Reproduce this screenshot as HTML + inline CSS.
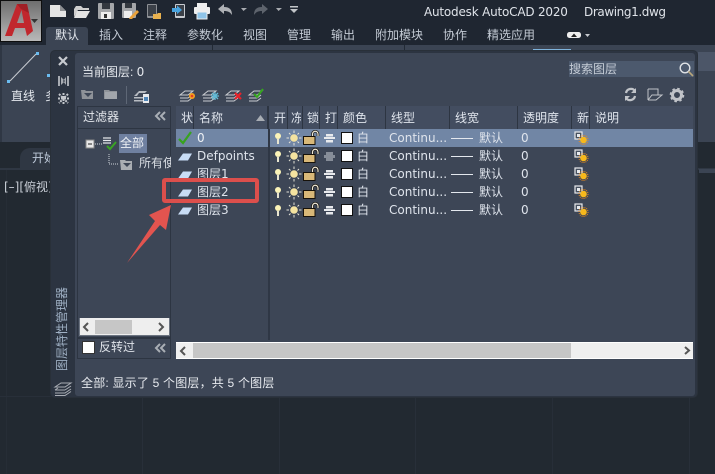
<!DOCTYPE html>
<html><head><meta charset="utf-8">
<style>
html,body{margin:0;padding:0;background:#222931}
body{width:715px;height:474px;position:relative;overflow:hidden;font:12px "Liberation Sans","Noto Sans CJK SC",sans-serif;color:#dfe4ec}
.a{position:absolute}
.t{position:absolute;white-space:nowrap;line-height:16px;font-size:12px}
.l{font-family:"DejaVu Sans","Noto Sans CJK SC",sans-serif}
.m{color:#c3cad4}
svg{position:absolute;overflow:visible}
</style></head><body>
<!-- background -->
<div class="a" style="left:0;top:0;width:715px;height:45px;background:#1f2631"></div>
<div class="a" style="left:0;top:45px;width:715px;height:97px;background:#3b4453"></div>
<div class="a" style="left:0;top:45px;width:2px;height:97px;background:#2f3744"></div>
<div class="a" style="left:0;top:142px;width:715px;height:27px;background:#222931"></div>
<div class="a" style="left:0;top:168px;width:715px;height:2px;background:#2f3743"></div>
<div class="a" style="left:20px;top:148px;width:40px;height:21px;background:#2f3743;border-radius:10px 0 0 0"></div>
<div class="a" style="left:698px;top:52px;width:17px;height:19px;background:#4c5668"></div>
<div class="a" style="left:699px;top:169px;width:16px;height:4px;background:#3b4453"></div>
<div class="a" style="left:142px;top:397px;width:1px;height:77px;background:#282f39"></div>
<div class="a" style="left:279px;top:397px;width:1px;height:77px;background:#282f39"></div>
<div class="a" style="left:415px;top:397px;width:1px;height:77px;background:#282f39"></div>
<div class="a" style="left:552px;top:397px;width:1px;height:77px;background:#272e38"></div>
<div class="a" style="left:689px;top:397px;width:1px;height:77px;background:#282f39"></div>
<div class="a" style="left:6px;top:170px;width:1px;height:304px;background:#262d36"></div>
<div class="a" style="left:0;top:396px;width:51px;height:1px;background:#282f39"></div>
<div class="a" style="left:212px;top:45px;width:1px;height:5px;background:#222a35"></div>
<div class="a" style="left:404px;top:45px;width:1px;height:5px;background:#222a35"></div>
<div class="a" style="left:533px;top:49px;width:38px;height:1px;background:#7fb3dc"></div>

<!-- logo -->
<div class="a" style="left:0;top:0;width:40px;height:40px;background:linear-gradient(#6e6e6e,#b9b9b9);border:1px solid #0e0e0e;box-sizing:content-box"></div>
<svg style="left:0;top:0" width="42" height="42">
<path d="M5 36 L17 4 H27 L33 31 L27 36 L25 28 H15 L12 36Z M17 23 H24 L21.500 10Z" fill="#c1272d" fill-rule="evenodd"/>
<path d="M17 4 H27 L29 13 L21 9Z" fill="#9f1f25"/>
<path d="M31 19 H38 L34.500 23Z" fill="#333"/>
</svg>

<!-- quick access icons -->
<svg style="left:0;top:0" width="320" height="27">
<path d="M50 5 H60 L66 11 V17 H50Z" fill="#e4e4e4"/><path d="M60 5 L66 11 H60Z" fill="#8d8f92"/>
<path d="M74 9 L76 6 H81 L83 8 H89 V10 H78 L74 17Z" fill="#cfcfcf"/><path d="M77 11 H90 L86 18 H74Z" fill="#e4e4e4"/>
<rect x="98" y="3" width="16" height="16" rx="1" fill="#a4a6a9"/><rect x="102" y="3" width="8" height="6" fill="#33383f"/><rect x="101" y="12" width="10" height="7" fill="#eee"/><rect x="104" y="14" width="3" height="4" fill="#333"/>
<rect x="122" y="3" width="14" height="15" rx="1" fill="#a4a6a9"/><rect x="125" y="3" width="7" height="5" fill="#33383f"/><rect x="124" y="11" width="8" height="7" fill="#eee"/><path d="M130 17 L137 10 L139 12 L132 19 L129 19Z" fill="#e9a23b"/>
<rect x="147" y="4" width="10" height="14" rx="1" fill="#8d9095"/><rect x="148" y="5" width="8" height="11" fill="#3b4048"/><path d="M153 14 H157 L158 13 H161 V19 H153Z" fill="#e8b14f"/>
<rect x="175" y="4" width="10" height="14" rx="1" fill="#c8cbd0"/><rect x="176" y="5" width="8" height="11" fill="#3b4048"/><path d="M172 8 H177 V5.500 L182 10 L177 14 V12 H172Z" fill="#49a4e0"/>
<rect x="197" y="3" width="10" height="4" fill="#eee"/><rect x="194" y="7" width="16" height="7" rx="1" fill="#eee"/><rect x="197" y="12" width="10" height="7" fill="#8fc4e8" stroke="#eee"/>
<path d="M218 9 L224 4 V7 C230 7 232 10 232 15 C230 12 228 11 224 11 V14Z" fill="#aeb1b5"/>
<path d="M241 8 H247 L243.500 11Z M276 8 H282 L278.500 11Z" fill="#a8abb0"/>
<path d="M268 9 L262 4 V7 C256 7 254 10 254 15 C256 12 258 11 262 11 V14Z" fill="#5d636c"/>
<rect x="290" y="6" width="8" height="1.500" fill="#c2c5c9"/><path d="M290 9 H298 L294 13Z" fill="#c2c5c9"/>
</svg>
<div class="t l" style="left:424px;top:4px;font-size:12px;letter-spacing:-.2px;color:#dfe3e9">Autodesk AutoCAD 2020</div>
<div class="t l" style="left:584px;top:4px;font-size:12px;letter-spacing:-.4px;color:#dfe3e9">Drawing1.dwg</div>

<!-- tabs -->
<div class="a" style="left:46px;top:27px;width:42px;height:18px;background:#3b4453;border-radius:3px 3px 0 0"></div>
<div class="t" style="left:55px;top:27px;color:#e4e8ee">默认</div>
<div class="t m" style="left:99px;top:27px">插入</div>
<div class="t m" style="left:143px;top:27px">注释</div>
<div class="t m" style="left:187px;top:27px">参数化</div>
<div class="t m" style="left:243px;top:27px">视图</div>
<div class="t m" style="left:287px;top:27px">管理</div>
<div class="t m" style="left:331px;top:27px">输出</div>
<div class="t m" style="left:375px;top:27px">附加模块</div>
<div class="t m" style="left:443px;top:27px">协作</div>
<div class="t m" style="left:487px;top:27px">精选应用</div>
<svg style="left:566px;top:31px" width="30" height="8"><rect x="1" y="1" width="14" height="6" rx="2.500" fill="#eee"/><path d="M5 6 L8 2.500 L11 6Z" fill="#222"/><path d="M19 3 H24 L21.500 6Z" fill="#c6c9ce"/></svg>

<!-- ribbon content -->
<svg style="left:0;top:45px" width="52" height="50"><path d="M10 36 L36 9" stroke="#c8ccd2" stroke-width="1"/><rect x="36" y="7" width="3" height="3" fill="#6bbcf0"/><rect x="7" y="35" width="3" height="3" fill="#6bbcf0"/><rect x="47" y="29" width="3" height="3" fill="#6bbcf0"/></svg>
<div class="t" style="left:11px;top:88px;color:#e4e8ee">直线</div>
<div class="t" style="left:45px;top:88px;color:#e4e8ee;width:5px;overflow:hidden">多</div>
<div class="t" style="left:32px;top:150px;color:#bcc8d8;width:19px;overflow:hidden">开始</div>
<div class="t l" style="left:4px;top:179px;color:#c9ced6;width:47px;overflow:hidden">[–][俯视]</div>

<!-- panel -->
<div class="a" style="left:51px;top:51px;width:646px;height:346px;background:#2c3441;border-radius:4px;box-shadow:0 0 0 1px #293039"></div>
<div class="a" style="left:75px;top:53px;width:620px;height:343px;background:#3d4656;border-radius:3px"></div>
<svg style="left:51px;top:51px" width="24" height="60">
<path d="M8 6 L16 14 M16 6 L8 14" stroke="#c8cbd0" stroke-width="2.200"/>
<path d="M8 25 V35 M17 25 V35" stroke="#a8acb2" stroke-width="2"/><path d="M10 26 L14 30 L10 34Z M15 26 L12 30 L15 34Z" fill="#a8acb2"/>
<path d="M8 43 L17 52 M17 43 L8 52 M12.500 42 V53 M7 47.500 H18" stroke="#c4c7cc" stroke-width="2" stroke-dasharray="2 1"/>
</svg>
<div class="a" style="left:20px;top:321px;width:84px;height:16px;line-height:16px;transform:rotate(-90deg);transform-origin:center;color:#9fb0c4;font-size:12px;white-space:nowrap;text-align:center">图层特性管理器</div>
<svg style="left:54px;top:381px" width="18" height="15" fill="none" stroke="#a9adb4" stroke-width="1"><path d="M1 6 L7 2 H17 L11 6Z M1 9 L4 7 M11 9 H1 M17 5 L11 9 M1 12 H11 L17 8 M1 14.500 H11 L17 10.500"/></svg>

<div class="t" style="left:82px;top:64px;color:#e6e9ee">当前图层: <span class="l">0</span></div>
<!-- search -->
<div class="a" style="left:569px;top:61px;width:125px;height:16px;background:#4c596d"></div>
<div class="t" style="left:569px;top:61px;color:#c5ccd6">搜索图层</div>
<svg style="left:678px;top:61px" width="16" height="16" fill="none"><circle cx="7" cy="7" r="4.800" stroke="#dfe2e6" stroke-width="1.400"/><path d="M10.500 10.500 L15 15" stroke="#b9a77c" stroke-width="1.600"/></svg>

<!-- toolbars -->
<svg style="left:0;top:84px" width="715" height="22">
<path d="M81 6 H85 L86 7 H93 V15 H82Z" fill="#8e9298"/><path d="M84 9 H92 L88 13Z" fill="#3d4656"/>
<path d="M104 6 H109 L110 7 H117 V15 H104Z" fill="#8e9298"/><rect x="105" y="8" width="12" height="7" fill="#a1a5ab"/>
<rect x="126" y="2" width="1" height="18" fill="#5e6776"/>
<path d="M134 12 L139 7 H147 L145 9 H139 L137 12Z" fill="#b8bcc2"/><rect x="134" y="13" width="9" height="1.500" fill="#b8bcc2"/><rect x="134" y="16" width="9" height="1.500" fill="#b8bcc2"/><rect x="143" y="10" width="6" height="9" fill="#e8eaed"/><rect x="144" y="13" width="4" height="4" fill="#4f86b8"/>
<g fill="none" stroke="#c9ccd1" stroke-width="1"><path d="M180 11 L185 7 H193 L188 11Z M180 14 H188 L192 11 M180 17 H188 L192 14"/></g>
<circle cx="192" cy="12" r="3" fill="#f4a11f"/><circle cx="192" cy="12" r="1.300" fill="#e23d28"/>
<g fill="none" stroke="#c9ccd1" stroke-width="1"><path d="M203 11 L208 7 H216 L211 11Z M203 14 H211 L215 11 M203 17 H211 L215 14"/></g>
<path d="M212 9 L218 15 M218 9 L212 15 M211 12 H219 M215 8 V16" stroke="#62bcd8" stroke-width="1.300"/>
<g fill="none" stroke="#c9ccd1" stroke-width="1"><path d="M226 11 L231 7 H239 L234 11Z M226 14 H234 L238 11 M226 17 H234 L238 14"/></g>
<path d="M235 9 L241 15 M241 9 L235 15" stroke="#e8222a" stroke-width="2.200"/>
<g fill="none" stroke="#c9ccd1" stroke-width="1"><path d="M249 11 L254 7 H262 L257 11Z M249 14 H257 L261 11 M249 17 H257 L261 14"/></g>
<path d="M254 10 L257 13 L263 5" stroke="#35a51f" stroke-width="2" fill="none"/>
<path d="M635 7 A5 5 0 0 0 626 9 M626 14 A5 5 0 0 0 635 12" stroke="#c0c3c8" stroke-width="2.200" fill="none"/><path d="M636 4 V9 H631Z M625 17 V12 H630Z" fill="#c0c3c8"/>
<path d="M648 5 H658 V11 M648 5 V16 M648 16 H656 L662 11 H652 L648 16" fill="none" stroke="#c0c3c8" stroke-width="1"/>
<circle cx="677" cy="11" r="4.500" fill="none" stroke="#c0c3c8" stroke-width="3"/><circle cx="677" cy="11" r="6.300" fill="none" stroke="#c0c3c8" stroke-width="2" stroke-dasharray="2.500 2.450"/>
</svg>

<!-- filter panel -->
<div class="a" style="left:77px;top:106px;width:94px;height:232px;border:1px solid #2d3542;box-sizing:border-box"></div>
<div class="a" style="left:78px;top:128px;width:92px;height:1px;background:#2d3542"></div>
<div class="t" style="left:83px;top:109px;color:#e4e7ec">过滤器</div>
<svg style="left:155px;top:111px" width="11" height="10" fill="none" stroke="#a9aeb5" stroke-width="2"><path d="M5 1 L1 5 L5 9 M10 1 L6 5 L10 9"/></svg>
<svg style="left:85px;top:134px" width="60" height="50">
<rect x="1" y="6" width="8" height="8" fill="#e8e8e8" stroke="#888"/><rect x="3" y="9.500" width="4" height="1" fill="#222"/>
<path d="M10 10 H18 M24 20 V30 H34" stroke="#d0d4da" stroke-width="1" stroke-dasharray="1 1" fill="none"/>
<path d="M18 4 H26 M18 6.500 H26 M18 9 H26" stroke="#e4e6ea" stroke-width="1.200"/>
<path d="M22 12 L25 15 L31 8" stroke="#3aa424" stroke-width="2" fill="none"/>
<path d="M35 26 H40 L41 27 H47 V36 H36Z" fill="#a9adb2"/><path d="M38 29 H46 L42 33Z" fill="#3d4656"/>
</svg>
<div class="a" style="left:119px;top:134px;width:28px;height:19px;background:#6f80a0"></div>
<div class="t" style="left:120px;top:135px;color:#eef1f5">全部</div>
<div class="t" style="left:139px;top:155px;color:#d9dde3;width:32px;overflow:hidden">所有使用</div>
<!-- filter scrollbar -->
<div class="a" style="left:79px;top:318px;width:91px;height:18px;background:#eee;border:1px solid #6c7480;border-top:0;box-sizing:border-box"></div>
<div class="a" style="left:95px;top:320px;width:37px;height:14px;background:#c6c6c6"></div>
<svg style="left:79px;top:318px" width="91" height="18" fill="none" stroke="#555" stroke-width="2"><path d="M9 5 L5 9 L9 13 M80 5 L84 9 L80 13"/></svg>
<div class="a" style="left:77px;top:338px;width:94px;height:21px;border:1px solid #2d3542;box-sizing:border-box"></div>
<div class="a" style="left:82px;top:341px;width:13px;height:13px;background:#fff;border:1px solid #333;box-sizing:border-box"></div>
<div class="t" style="left:99px;top:339px;color:#dfe3e9">反转过</div>
<svg style="left:155px;top:343px" width="11" height="10" fill="none" stroke="#a9aeb5" stroke-width="2"><path d="M5 1 L1 5 L5 9 M10 1 L6 5 L10 9"/></svg>

<!-- header -->
<div class="a" style="left:176px;top:106px;width:517px;height:23px;background:#434d60"></div>
<div class="a" style="left:193px;top:106px;width:1px;height:23px;background:#2d3542"></div>
<div class="a" style="left:267px;top:106px;width:2px;height:23px;background:#2d3542"></div>
<div class="a" style="left:287px;top:106px;width:1px;height:23px;background:#2d3542"></div>
<div class="a" style="left:302px;top:106px;width:1px;height:23px;background:#2d3542"></div>
<div class="a" style="left:319px;top:106px;width:1px;height:23px;background:#2d3542"></div>
<div class="a" style="left:337px;top:106px;width:1px;height:23px;background:#2d3542"></div>
<div class="a" style="left:385px;top:106px;width:1px;height:23px;background:#2d3542"></div>
<div class="a" style="left:449px;top:106px;width:1px;height:23px;background:#2d3542"></div>
<div class="a" style="left:517px;top:106px;width:1px;height:23px;background:#2d3542"></div>
<div class="a" style="left:571px;top:106px;width:1px;height:23px;background:#2d3542"></div>
<div class="a" style="left:589px;top:106px;width:1px;height:23px;background:#2d3542"></div>
<div class="t" style="left:181px;top:110px">状</div>
<div class="t" style="left:199px;top:110px">名称</div>
<svg style="left:256px;top:114px" width="10" height="8"><path d="M0 7 L4.500 1 L9 7Z" fill="#a8adb4"/></svg>
<div class="t" style="left:274px;top:110px">开</div>
<div class="t" style="left:291px;top:110px;width:10px;overflow:hidden">冻结</div>
<div class="t" style="left:307px;top:110px;width:12px;overflow:hidden">锁</div>
<div class="t" style="left:325px;top:110px">打</div>
<div class="t" style="left:343px;top:110px">颜色</div>
<div class="t" style="left:391px;top:110px">线型</div>
<div class="t" style="left:455px;top:110px">线宽</div>
<div class="t" style="left:523px;top:110px">透明度</div>
<div class="t" style="left:577px;top:110px;width:12px;overflow:hidden">新</div>
<div class="t" style="left:595px;top:110px">说明</div>

<!-- rows -->
<div class="a" style="left:176px;top:129px;width:517px;height:18px;background:#7186a5"></div>
<div class="a" style="left:268px;top:129px;width:2px;height:211px;background:#2f3745"></div>
<svg width="0" height="0" style="left:0;top:0"><defs>
<g id="row">
<circle cx="278" cy="-2" r="3" fill="#fbf3b8"/><rect x="277" y="1" width="2" height="5" fill="#e8e5d0"/>
<circle cx="294" cy="0" r="3.800" fill="#f4e3a0"/>
<path d="M294 -7.500 V-5 M294 5 V7.500 M286.500 0 H289 M299 0 H301.500 M289 -5 L290.500 -3.500 M299 -5 L297.500 -3.500 M289 5 L290.500 3.500 M299 5 L297.500 3.500" stroke="#e4e2d6" stroke-width="1"/>
<path d="M312.500 -1 V-4 A2.700 2.700 0 0 1 318 -4 V-2" fill="none" stroke="#17120a" stroke-width="2.600"/>
<path d="M312.500 -1 V-4 A2.700 2.700 0 0 1 318 -4 V-2" fill="none" stroke="#efe9d8" stroke-width="1.200"/>
<rect x="303.500" y="-1.500" width="11.500" height="8" fill="#d8b878" stroke="#17120a" stroke-width="1"/>
<rect x="326" y="-4" width="7" height="2.500" fill="#e8eaed"/><rect x="324" y="-1" width="11" height="2" fill="#e8eaed"/><rect x="326" y="2" width="7" height="2.500" fill="#e8eaed"/>
<rect x="341.500" y="-5.500" width="11" height="11" fill="#fff" stroke="#111" stroke-width="1"/>
<rect x="575" y="-6" width="7" height="7" fill="#46505f" stroke="#e8eaed" stroke-width="1.200"/><rect x="577" y="-4" width="3" height="3" fill="#e8eaed"/>
<circle cx="583.500" cy="2" r="3.300" fill="#f7b81c"/><circle cx="583.500" cy="2" r="4.500" fill="none" stroke="#ed8b1a" stroke-width="1" stroke-dasharray="1 1"/>
</g>
<g id="par"><path d="M178 3.500 L183 -3.500 H192 L188 3.500Z" fill="#c8dcf5"/></g>
</defs></svg>
<svg style="left:0;top:0" width="715" height="230">
<use href="#row" x="0" y="138"/><use href="#row" x="0" y="156"/><use href="#row" x="0" y="174"/><use href="#row" x="0" y="192"/><use href="#row" x="0" y="210"/>
<path d="M179 139 L183 143 L191 132" stroke="#37a31e" stroke-width="2.200" fill="none"/>
<use href="#par" x="0" y="157"/><use href="#par" x="0" y="175"/><use href="#par" x="0" y="193"/><use href="#par" x="0" y="211"/>
<rect x="323" y="151" width="13" height="11" fill="#3d4656"/>
<path d="M326 152 H333 V155 H335 V158 H333 V161 H326 V158 H324 V155 H326Z" fill="#868d98"/>
</svg>
<div class="t l" style="left:197px;top:130px;color:#eef1f5">0</div>
<div class="t l" style="left:197px;top:148px;color:#dfe4ec">Defpoints</div>
<div class="t l" style="left:197px;top:166px;color:#dfe4ec">图层1</div>
<div class="t l" style="left:197px;top:184px;color:#dfe4ec">图层2</div>
<div class="t l" style="left:197px;top:202px;color:#dfe4ec">图层3</div>

<div class="t" style="left:357px;top:130px">白</div>
<div class="t" style="left:357px;top:148px">白</div>
<div class="t" style="left:357px;top:166px">白</div>
<div class="t" style="left:357px;top:184px">白</div>
<div class="t" style="left:357px;top:202px">白</div>
<div class="t l" style="left:389px;top:130px">Continu...</div>
<div class="t l" style="left:389px;top:148px">Continu...</div>
<div class="t l" style="left:389px;top:166px">Continu...</div>
<div class="t l" style="left:389px;top:184px">Continu...</div>
<div class="t l" style="left:389px;top:202px">Continu...</div>
<div class="a" style="left:451px;top:138px;width:22px;height:1px;background:#e4e8ee"></div>
<div class="a" style="left:451px;top:156px;width:22px;height:1px;background:#e4e8ee"></div>
<div class="a" style="left:451px;top:174px;width:22px;height:1px;background:#e4e8ee"></div>
<div class="a" style="left:451px;top:192px;width:22px;height:1px;background:#e4e8ee"></div>
<div class="a" style="left:451px;top:210px;width:22px;height:1px;background:#e4e8ee"></div>
<div class="t" style="left:479px;top:130px">默认</div>
<div class="t" style="left:479px;top:148px">默认</div>
<div class="t" style="left:479px;top:166px">默认</div>
<div class="t" style="left:479px;top:184px">默认</div>
<div class="t" style="left:479px;top:202px">默认</div>
<div class="t l" style="left:521px;top:130px">0</div>
<div class="t l" style="left:521px;top:148px">0</div>
<div class="t l" style="left:521px;top:166px">0</div>
<div class="t l" style="left:521px;top:184px">0</div>
<div class="t l" style="left:521px;top:202px">0</div>

<!-- bottom scrollbar -->
<div class="a" style="left:176px;top:342px;width:517px;height:17px;background:#efefef;border-top:1px solid #fff;border-bottom:1px solid #fff;box-sizing:border-box"></div>
<div class="a" style="left:193px;top:343px;width:378px;height:15px;background:#c6c6c6"></div>
<svg style="left:176px;top:342px" width="517" height="17" fill="none" stroke="#555" stroke-width="2"><path d="M9 5 L5 9 L9 13 M509 5 L513 8.500 L509 12"/></svg>
<div class="t" style="left:81px;top:375px;color:#e6e9ee;letter-spacing:.2px">全部: 显示了 5 个图层，共 5 个图层</div>

<!-- annotation -->
<div class="a" style="left:162px;top:178px;width:97px;height:25px;border:4px solid #dc4f4c;border-radius:3px;box-sizing:border-box"></div>
<svg style="left:0;top:0" width="200" height="280"><path d="M127 263 L155 221 L149 215 L171 205 L166 230 L160 225Z" fill="#e2544f"/></svg>
</body></html>
